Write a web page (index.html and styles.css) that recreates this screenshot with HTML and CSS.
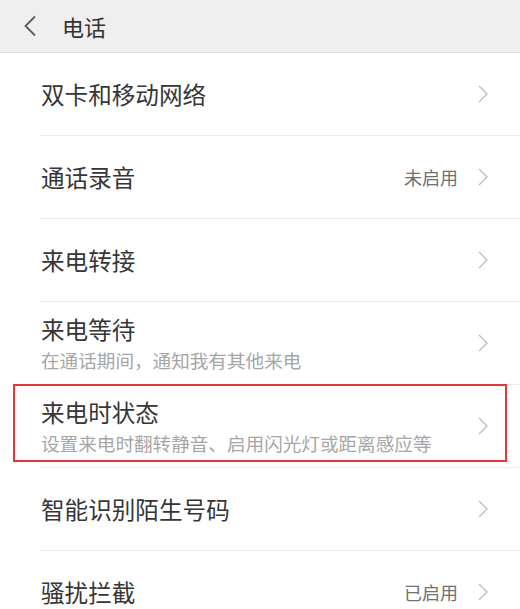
FILE: index.html
```html
<!DOCTYPE html>
<html lang="zh-CN">
<head>
<meta charset="utf-8">
<title>电话</title>
<link rel="stylesheet" href="styles.css">
</head>
<body>
<header class="topbar">
  <svg class="back" width="14" height="22" viewBox="0 0 14 22"><path d="M12 1.5 L2.5 11 L12 20.5" fill="none" stroke="#5a5a5a" stroke-width="1.8"/></svg>
  <h1 class="title">电话</h1>
</header>
<ul class="list">
  <li class="row"><div class="text"><div class="main">双卡和移动网络</div></div><svg class="chev" width="12" height="20" viewBox="0 0 12 20"><path d="M2 2 L10 10 L2 18" fill="none" stroke="#bdbdbd" stroke-width="1.4"/></svg></li>
  <li class="row"><div class="text"><div class="main">通话录音</div></div><span class="value">未启用</span><svg class="chev" width="12" height="20" viewBox="0 0 12 20"><path d="M2 2 L10 10 L2 18" fill="none" stroke="#bdbdbd" stroke-width="1.4"/></svg></li>
  <li class="row"><div class="text"><div class="main">来电转接</div></div><svg class="chev" width="12" height="20" viewBox="0 0 12 20"><path d="M2 2 L10 10 L2 18" fill="none" stroke="#bdbdbd" stroke-width="1.4"/></svg></li>
  <li class="row"><div class="text"><div class="main">来电等待</div><div class="sub">在通话期间，通知我有其他来电</div></div><svg class="chev" width="12" height="20" viewBox="0 0 12 20"><path d="M2 2 L10 10 L2 18" fill="none" stroke="#bdbdbd" stroke-width="1.4"/></svg></li>
  <li class="row highlighted"><div class="text"><div class="main">来电时状态</div><div class="sub">设置来电时翻转静音、启用闪光灯或距离感应等</div></div><svg class="chev" width="12" height="20" viewBox="0 0 12 20"><path d="M2 2 L10 10 L2 18" fill="none" stroke="#bdbdbd" stroke-width="1.4"/></svg></li>
  <li class="row"><div class="text"><div class="main">智能识别陌生号码</div></div><svg class="chev" width="12" height="20" viewBox="0 0 12 20"><path d="M2 2 L10 10 L2 18" fill="none" stroke="#bdbdbd" stroke-width="1.4"/></svg></li>
  <li class="row"><div class="text"><div class="main">骚扰拦截</div></div><span class="value">已启用</span><svg class="chev" width="12" height="20" viewBox="0 0 12 20"><path d="M2 2 L10 10 L2 18" fill="none" stroke="#bdbdbd" stroke-width="1.4"/></svg></li>
</ul>
</body>
</html>
```
FILE: styles.css
```css
html, body {
  margin: 0;
  padding: 0;
  background: #ffffff;
  font-family: "Noto Sans CJK SC", "Noto Sans", sans-serif;
  overflow: hidden;
}
.topbar {
  height: 52px;
  background: #efefef;
  border-bottom: 1px solid #dcdcdc;
  display: flex;
  align-items: center;
  padding-left: 23px;
}
.back {
  display: block;
}
.title {
  margin: 0 0 0 25px;
  font-size: 22px;
  font-weight: 400;
  color: #333;
  line-height: 1;
}
.list {
  list-style: none;
  margin: 0;
  padding: 0;
}
.row {
  position: relative;
  height: 82px;
  margin-left: 40px;
  padding-left: 1px;
  padding-right: 31px;
  border-bottom: 1px solid #ebebeb;
  display: flex;
  align-items: center;
}
.text {
  flex: 1;
  display: flex;
  flex-direction: column;
}
.main {
  font-size: 23.6px;
  color: #363636;
  line-height: 28px;
}
.sub {
  font-size: 18.6px;
  color: #a6a6a6;
  line-height: 22px;
  margin-top: 6px;
}
.value {
  font-size: 18px;
  color: #707070;
  margin-right: 19px;
}
.chev {
  display: block;
  flex: none;
}
.highlighted::after {
  content: "";
  position: absolute;
  left: -27px;
  right: 13px;
  top: -1px;
  height: 74px;
  border: 2px solid #e1373c;
}
```
